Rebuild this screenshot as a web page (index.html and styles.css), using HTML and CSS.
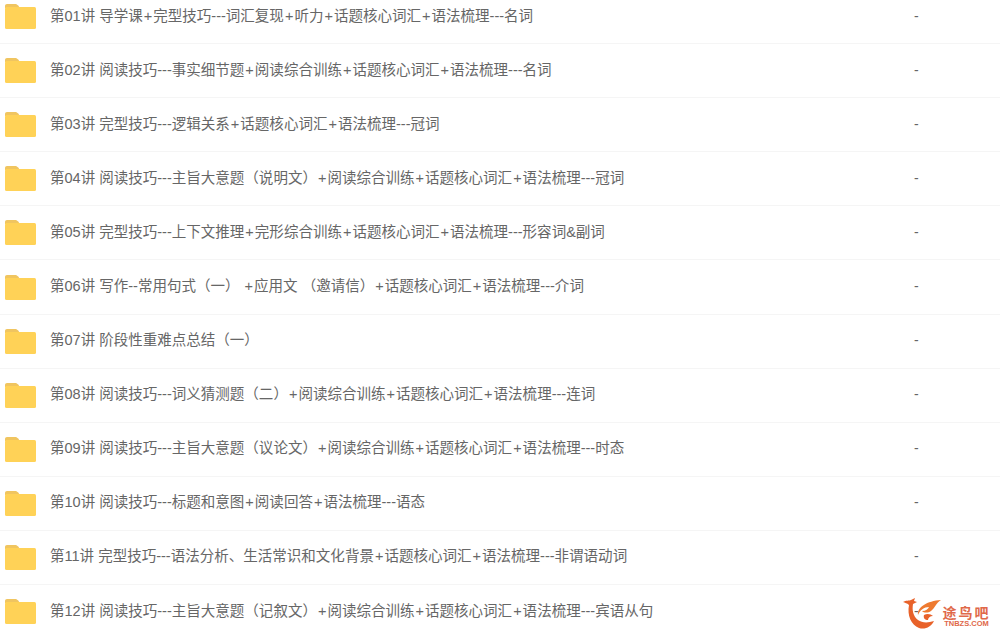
FILE: index.html
```html
<!DOCTYPE html>
<html>
<head>
    <title>文件列表</title>
    <link rel="stylesheet" href="styles.css">
</head>
<body>
    <svg class="defs" width="0" height="0">
        <symbol id="folder" viewBox="0 0 31 25">
            <path d="M0 4V2C0 .8.8 0 2 0h8c1.500 0 2.300.6 3.200 1.600L15 4z" fill="#f0c560"/>
            <rect x="0" y="3" width="31" height="22" rx="1.500" fill="#ffd257"/>
        </symbol>
    </svg>

    <div class="list">
        <div class="row"><svg class="folder"><use href="#folder"/></svg><span class="name">第01讲 导学课<b>+</b>完型技巧---词汇复现<b>+</b>听力<b>+</b>话题核心词汇<b>+</b>语法梳理---名词</span><span class="size">-</span></div>
        <div class="row"><svg class="folder"><use href="#folder"/></svg><span class="name">第02讲 阅读技巧---事实细节题<b>+</b>阅读综合训练<b>+</b>话题核心词汇<b>+</b>语法梳理---名词</span><span class="size">-</span></div>
        <div class="row"><svg class="folder"><use href="#folder"/></svg><span class="name">第03讲 完型技巧---逻辑关系<b>+</b>话题核心词汇<b>+</b>语法梳理---冠词</span><span class="size">-</span></div>
        <div class="row"><svg class="folder"><use href="#folder"/></svg><span class="name">第04讲 阅读技巧---主旨大意题（说明文）<b>+</b>阅读综合训练<b>+</b>话题核心词汇<b>+</b>语法梳理---冠词</span><span class="size">-</span></div>
        <div class="row"><svg class="folder"><use href="#folder"/></svg><span class="name">第05讲 完型技巧---上下文推理<b>+</b>完形综合训练<b>+</b>话题核心词汇<b>+</b>语法梳理---形容词&amp;副词</span><span class="size">-</span></div>
        <div class="row"><svg class="folder"><use href="#folder"/></svg><span class="name">第06讲 写作--常用句式（一） <b>+</b>应用文 （邀请信）<b>+</b>话题核心词汇<b>+</b>语法梳理---介词</span><span class="size">-</span></div>
        <div class="row"><svg class="folder"><use href="#folder"/></svg><span class="name">第07讲 阶段性重难点总结（一）</span><span class="size">-</span></div>
        <div class="row"><svg class="folder"><use href="#folder"/></svg><span class="name">第08讲 阅读技巧---词义猜测题（二）<b>+</b>阅读综合训练<b>+</b>话题核心词汇<b>+</b>语法梳理---连词</span><span class="size">-</span></div>
        <div class="row"><svg class="folder"><use href="#folder"/></svg><span class="name">第09讲 阅读技巧---主旨大意题（议论文）<b>+</b>阅读综合训练<b>+</b>话题核心词汇<b>+</b>语法梳理---时态</span><span class="size">-</span></div>
        <div class="row"><svg class="folder"><use href="#folder"/></svg><span class="name">第10讲 阅读技巧---标题和意图<b>+</b>阅读回答<b>+</b>语法梳理---语态</span><span class="size">-</span></div>
        <div class="row"><svg class="folder"><use href="#folder"/></svg><span class="name">第11讲 完型技巧---语法分析、生活常识和文化背景<b>+</b>话题核心词汇<b>+</b>语法梳理---非谓语动词</span><span class="size">-</span></div>
        <div class="row"><svg class="folder"><use href="#folder"/></svg><span class="name">第12讲 阅读技巧---主旨大意题（记叙文）<b>+</b>阅读综合训练<b>+</b>话题核心词汇<b>+</b>语法梳理---宾语从句</span><span class="size">-</span></div>
    </div>

    <div class="logo">
        <svg class="logo-bird" viewBox="0 0 40 32">
            <path d="M0 4C3 2 6 3 8 2L12 0 11 3 14 4 10 6C9 12 10 18 15 22 19 25 25 25 31 23 28 29 22 32 16 30 8 27 4 17 6 7 4 5 2 5 0 4z" fill="#e8622a"/>
            <path d="M15 17C14 9 24 3 38 2 33 5 32 10 28 13 25 15 21 15 19 13 23 13 25 11 26 9 21 9 17 12 15 17z" fill="#ee7a30"/>
            <path d="M21 17C24 15 28 16 30 18 27 18 25 20 25 22 22 22 20 20 21 17z" fill="#e8622a"/>
        </svg>
        <div class="logo-text">
            <span class="logo-cn">途鸟吧</span>
            <span class="logo-en">TNBZS.COM</span>
        </div>
    </div>
</body>
</html>
```

FILE: styles.css
```css
/* Basic page */
html, body {
    height: 633px;
    overflow: hidden;
}

body {
    margin: 0;
    position: relative;
    background-color: #fff;
    font-family: "Microsoft YaHei", "Liberation Sans", "Noto Sans CJK SC", sans-serif;
    color: #666;
}

.defs {
    position: absolute;
}

/* File rows */
.list {
    margin-top: -10px;
}

.row {
    display: flex;
    align-items: center;
    box-sizing: border-box;
    height: 54.1px;
    padding-left: 5px;
    border-bottom: 1px solid #f5f5f5;
}

.folder {
    flex: none;
    width: 31px;
    height: 25px;
    margin-right: 14px;
}

.name {
    width: 864px;
    flex: none;
    margin-top: -5px;
    font-size: 14.53px;
    white-space: nowrap;
}

/* plus signs are wider in the reference font */
.name b {
    font-weight: normal;
    margin: 0 1px;
}

.size {
    margin-top: -2px;
    font-size: 14px;
}

/* Watermark */
.logo {
    position: absolute;
    right: 10px;
    bottom: 3px;
    display: flex;
    align-items: flex-end;
    gap: 0;
}

.logo-bird {
    width: 40px;
    height: 32px;
}

.logo-text {
    display: flex;
    flex-direction: column;
    align-items: center;
    width: 47px;
    padding-bottom: 3px;
    color: #e0694a;
    white-space: nowrap;
}

.logo-cn {
    font-size: 14px;
    line-height: 14px;
    letter-spacing: 2px;
    font-weight: bold;
}

.logo-en {
    font-size: 7.500px;
    line-height: 7px;
    font-weight: bold;
}
```
